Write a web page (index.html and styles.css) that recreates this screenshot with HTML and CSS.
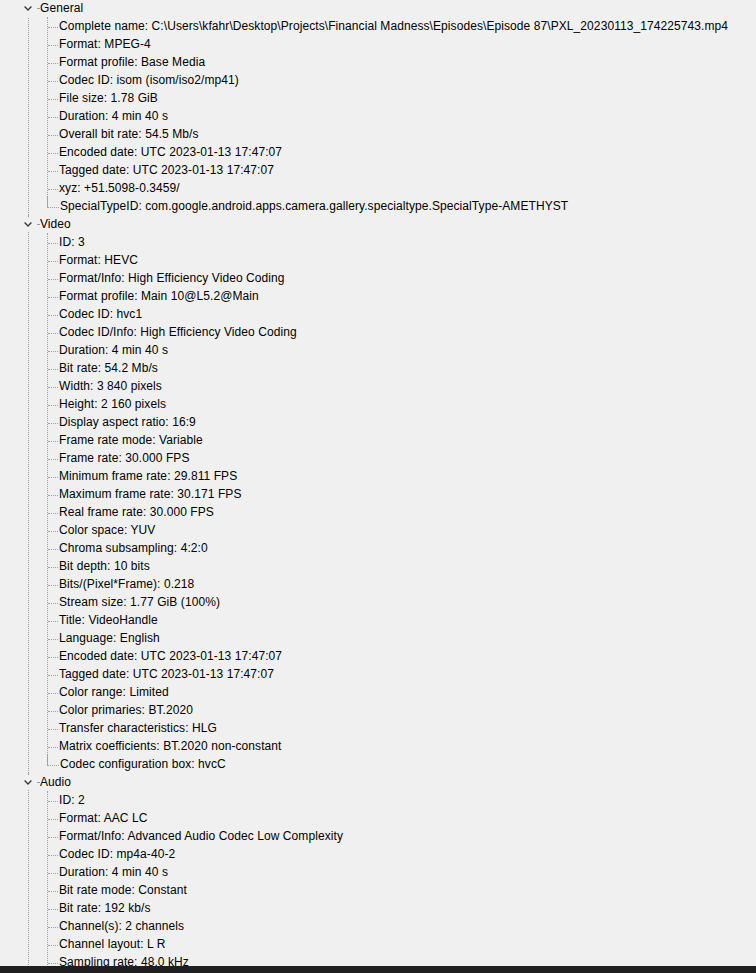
FILE: index.html
```html
<!DOCTYPE html>
<html lang="en">
  <head>
    <meta charset="UTF-8" />
    <meta name="viewport" content="width=device-width, initial-scale=1.0" />
    <title>MediaInfo - Tree</title>
    <link rel="stylesheet" href="styles.css">
  </head>

  <body>
    <div class="window">
      <div class="tree">
        <!-- General -->
        <div class="node">
          <div class="head">
            <span class="toggle"><svg width="8" height="5" viewBox="0 0 8 5"><polyline points="0.6,0.6 4,4 7.4,0.6" /></svg></span>
            <span class="stub"></span>
            <span class="label">General</span>
          </div>
          <ul class="items">
            <li>Complete name: C:\Users\kfahr\Desktop\Projects\Financial Madness\Episodes\Episode 87\PXL_20230113_174225743.mp4</li>
            <li>Format: MPEG-4</li>
            <li>Format profile: Base Media</li>
            <li>Codec ID: isom (isom/iso2/mp41)</li>
            <li>File size: 1.78 GiB</li>
            <li>Duration: 4 min 40 s</li>
            <li>Overall bit rate: 54.5 Mb/s</li>
            <li>Encoded date: UTC 2023-01-13 17:47:07</li>
            <li>Tagged date: UTC 2023-01-13 17:47:07</li>
            <li>xyz: +51.5098-0.3459/</li>
            <li>SpecialTypeID: com.google.android.apps.camera.gallery.specialtype.SpecialType-AMETHYST</li>
          </ul>
        </div>

        <!-- Video -->
        <div class="node">
          <div class="head">
            <span class="toggle"><svg width="8" height="5" viewBox="0 0 8 5"><polyline points="0.6,0.6 4,4 7.4,0.6" /></svg></span>
            <span class="stub"></span>
            <span class="label">Video</span>
          </div>
          <ul class="items">
            <li>ID: 3</li>
            <li>Format: HEVC</li>
            <li>Format/Info: High Efficiency Video Coding</li>
            <li>Format profile: Main 10@L5.2@Main</li>
            <li>Codec ID: hvc1</li>
            <li>Codec ID/Info: High Efficiency Video Coding</li>
            <li>Duration: 4 min 40 s</li>
            <li>Bit rate: 54.2 Mb/s</li>
            <li>Width: 3 840 pixels</li>
            <li>Height: 2 160 pixels</li>
            <li>Display aspect ratio: 16:9</li>
            <li>Frame rate mode: Variable</li>
            <li>Frame rate: 30.000 FPS</li>
            <li>Minimum frame rate: 29.811 FPS</li>
            <li>Maximum frame rate: 30.171 FPS</li>
            <li>Real frame rate: 30.000 FPS</li>
            <li>Color space: YUV</li>
            <li>Chroma subsampling: 4:2:0</li>
            <li>Bit depth: 10 bits</li>
            <li>Bits/(Pixel*Frame): 0.218</li>
            <li>Stream size: 1.77 GiB (100%)</li>
            <li>Title: VideoHandle</li>
            <li>Language: English</li>
            <li>Encoded date: UTC 2023-01-13 17:47:07</li>
            <li>Tagged date: UTC 2023-01-13 17:47:07</li>
            <li>Color range: Limited</li>
            <li>Color primaries: BT.2020</li>
            <li>Transfer characteristics: HLG</li>
            <li>Matrix coefficients: BT.2020 non-constant</li>
            <li>Codec configuration box: hvcC</li>
          </ul>
        </div>

        <!-- Audio -->
        <div class="node">
          <div class="head">
            <span class="toggle"><svg width="8" height="5" viewBox="0 0 8 5"><polyline points="0.6,0.6 4,4 7.4,0.6" /></svg></span>
            <span class="stub"></span>
            <span class="label">Audio</span>
          </div>
          <ul class="items">
            <li>ID: 2</li>
            <li>Format: AAC LC</li>
            <li>Format/Info: Advanced Audio Codec Low Complexity</li>
            <li>Codec ID: mp4a-40-2</li>
            <li>Duration: 4 min 40 s</li>
            <li>Bit rate mode: Constant</li>
            <li>Bit rate: 192 kb/s</li>
            <li>Channel(s): 2 channels</li>
            <li>Channel layout: L R</li>
            <li>Sampling rate: 48.0 kHz</li>
          </ul>
        </div>
      </div>

      <!-- 底下那條深色的邊 -->
      <div class="bottom-bar"></div>
    </div>
  </body>
</html>
```

FILE: styles.css
```css
* {
  margin: 0;
  padding: 0;
  box-sizing: border-box;
}
body {
  background: #f0f0f0;
  font-family: "Segoe UI", "Liberation Sans", Arial, sans-serif;
  font-size: 12px;
  letter-spacing: 0.08px;
  color: #000;
}
.window {
  display: flex;
  flex-direction: column;
  height: 973px;
}
.tree {
  flex: 1;
  overflow: hidden;
}
.tree > .node:first-child {
  margin-top: -1px;
}

/* 每一組 (General / Video / Audio) 左邊那條點線 */
.node {
  margin-left: 28px;
  border-left: 1px dotted #a0a0a0;
}

.head {
  display: flex;
  align-items: center;
  height: 18px;
}
/* 第一組的上半段不要線 */
.node:first-child > .head {
  margin-left: -1px;
  padding-left: 1px;
  background: #f0f0f0;
}

.toggle {
  display: flex;
  justify-content: center;
  align-items: center;
  width: 9px;
  height: 14px;
  margin-left: -6px;
  background: #f0f0f0;
}
.toggle polyline {
  fill: none;
  stroke: #3a3a3a;
  stroke-width: 1.4;
}

.stub {
  width: 2px;
  margin-left: 5px;
  border-top: 1px dotted #a0a0a0;
}
.label {
  margin-left: 1px;
  line-height: 18px;
}

/* 子項目 */
.items {
  list-style: none;
  margin-left: 18px;
  border-left: 1px dotted #a0a0a0;
}
.items li {
  display: flex;
  height: 18px;
  line-height: 18px;
  white-space: nowrap;
}
.items li::before {
  content: "";
  flex: none;
  width: 10px;
  height: 10px;
  margin-right: 1px;
  border-bottom: 1px dotted #a0a0a0;
}
/* 最後一個只畫到一半 */
.items li:last-child {
  margin-left: -1px;
  background: linear-gradient(to bottom, transparent 10px, #f0f0f0 10px);
}
.items li:last-child::before {
  width: 11px;
  border-left: 1px dotted #a0a0a0;
}
/* Audio 下面還有東西，線要一直往下 */
.node:last-child .items li:last-child {
  margin-left: 0;
  background: none;
}
.node:last-child .items li:last-child::before {
  width: 10px;
  border-left: none;
}

.bottom-bar {
  height: 7px;
  background: #1f1f1f;
}
```
